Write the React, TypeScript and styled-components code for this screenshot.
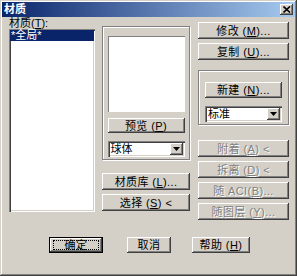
import React from 'react'
import styled, { createGlobalStyle, css } from 'styled-components'

const GlobalStyle = createGlobalStyle`
  html, body {
    margin: 0;
    padding: 0;
    background: #d4d0c8;
  }
  body {
    font-family: "Liberation Sans", "Noto Sans CJK SC", sans-serif;
    font-size: 11px;
    color: #000;
  }
`

const raised = css`
  background: #d4d0c8;
  box-shadow:
    inset -1px -1px 0 #404040,
    inset 1px 1px 0 #ffffff,
    inset -2px -2px 0 #808080,
    inset 2px 2px 0 #d4d0c8;
`

const sunken = css`
  box-shadow:
    inset 1px 1px 0 #808080,
    inset 2px 2px 0 #404040,
    inset -1px -1px 0 #ffffff,
    inset -2px -2px 0 #d4d0c8;
`

const Window = styled.div`
  width: 297px;
  height: 276px;
  box-sizing: border-box;
  padding: 2px;
  background: #d4d0c8;
  box-shadow:
    inset -1px -1px 0 #404040,
    inset 1px 1px 0 #d4d0c8,
    inset -2px -2px 0 #808080,
    inset 2px 2px 0 #ffffff;
  display: flex;
  flex-direction: column;
`

const TitleBar = styled.div`
  height: 15px;
  display: flex;
  align-items: center;
  justify-content: space-between;
  background: linear-gradient(to right, #0a246a, #a6caf0);
  padding: 0 2px;
`

const Title = styled.span`
  color: #fff;
  font-weight: bold;
  font-size: 11px;
  line-height: 13px;
`

const CloseButton = styled.div`
  ${raised}
  width: 13px;
  height: 11px;
  display: flex;
  align-items: center;
  justify-content: center;
`

const MainRow = styled.div`
  display: flex;
  align-items: flex-start;
  padding-left: 7px;
`

const Column = styled.div<{ $width: number; $left: number }>`
  width: ${p => p.$width}px;
  margin-left: ${p => p.$left}px;
  display: flex;
  flex-direction: column;
`

const Label = styled.div`
  height: 12px;
  line-height: 12px;
  white-space: nowrap;
`

const U = styled.span`
  text-decoration: underline;
`

const ListBox = styled.div`
  ${sunken}
  background: #fff;
  height: 183px;
  padding: 1px 1px;
  box-sizing: border-box;
`

const ListItem = styled.div<{ $selected?: boolean }>`
  height: 11px;
  line-height: 11px;
  padding-left: 1px;
  font-size: 11px;
  color: ${p => (p.$selected ? '#fff' : '#000')};
  background: ${p => (p.$selected ? '#0a246a' : 'transparent')};
`

const GroupBox = styled.div<{ $top: number; $height: number }>`
  margin-top: ${p => p.$top}px;
  height: ${p => p.$height}px;
  box-sizing: border-box;
  border: 1px solid #808080;
  box-shadow: inset 1px 1px 0 #fff, 1px 1px 0 #fff;
  display: flex;
  flex-direction: column;
  align-items: center;
`

const Preview = styled.div`
  margin-top: 9px;
  width: 77px;
  height: 76px;
  background: #fff;
  box-sizing: border-box;
  border-top: 1px solid #808080;
  border-left: 1px solid #808080;
`

const Button = styled.div<{ $top?: number; $width?: number; $height?: number; $disabled?: boolean }>`
  ${raised}
  margin-top: ${p => p.$top ?? 0}px;
  width: ${p => (p.$width ? `${p.$width}px` : '100%')};
  height: ${p => p.$height ?? 17}px;
  flex-shrink: 0;
  box-sizing: border-box;
  display: flex;
  align-items: center;
  justify-content: center;
  white-space: nowrap;
  font-size: 11px;
  line-height: 12px;
  letter-spacing: 0.4px;
  color: ${p => (p.$disabled ? '#808080' : '#000')};
  text-shadow: ${p => (p.$disabled ? '1px 1px 0 #fff' : 'none')};
`

const DefaultButton = styled(Button)`
  box-shadow:
    inset 0 0 0 1px #000,
    inset -2px -2px 0 #404040,
    inset 2px 2px 0 #ffffff,
    inset -3px -3px 0 #808080;
  position: relative;
`

const FocusRing = styled.span`
  position: absolute;
  inset: 3px 4px;
  border: 1px dotted #000;
`

const Combo = styled.div<{ $top: number; $width: number }>`
  ${sunken}
  margin-top: ${p => p.$top}px;
  width: ${p => p.$width}px;
  height: 16px;
  box-sizing: border-box;
  background: #fff;
  padding: 2px;
  display: flex;
  align-items: stretch;
`

const ComboText = styled.div`
  flex: 1;
  line-height: 12px;
  padding-left: 1px;
`

const ComboArrow = styled.div`
  ${raised}
  width: 13px;
  display: flex;
  align-items: center;
  justify-content: center;
`

const BottomRow = styled.div`
  display: flex;
  margin-top: 17px;
  padding-left: 47px;
`

const Gap = styled.div<{ $w: number }>`
  width: ${p => p.$w}px;
`

const Arrow = () => (
  <svg width="7" height="4" viewBox="0 0 7 4">
    <path d="M0 0h7L3.5 4z" fill="#000" />
  </svg>
)

export default function App() {
  return (
    <>
      <GlobalStyle />
      <Window>
        <TitleBar>
          <Title>材质</Title>
          <CloseButton>
            <svg width="8" height="7" viewBox="0 0 8 7">
              <path d="M0.5 0.5L7 6.5M7 0.5L0.5 6.5" stroke="#000" strokeWidth="1.6" />
            </svg>
          </CloseButton>
        </TitleBar>
        <MainRow>
          <Column $width={86} $left={0}>
            <Label>
              材质(<U>T</U>):
            </Label>
            <ListBox>
              <ListItem $selected>*全局*</ListItem>
            </ListBox>
          </Column>
          <Column $width={88} $left={7}>
            <GroupBox $top={9} $height={134}>
              <Preview />
              <Button $top={6} $width={77} $height={15}>
                预览 (<U>P</U>)
              </Button>
              <Combo $top={8} $width={77}>
                <ComboText>球体</ComboText>
                <ComboArrow>
                  <Arrow />
                </ComboArrow>
              </Combo>
            </GroupBox>
            <Button $top={13}>
              材质库 (<U>L</U>)...
            </Button>
            <Button $top={4}>
              选择 (<U>S</U>) &lt;
            </Button>
          </Column>
          <Column $width={91} $left={8}>
            <Button $top={5}>
              修改 (<U>M</U>)...
            </Button>
            <Button $top={4}>
              复制 (<U>U</U>)...
            </Button>
            <GroupBox $top={10} $height={55}>
              <Button $top={11} $width={77} $height={16}>
                新建 (<U>N</U>)...
              </Button>
              <Combo $top={8} $width={77}>
                <ComboText>标准</ComboText>
                <ComboArrow>
                  <Arrow />
                </ComboArrow>
              </Combo>
            </GroupBox>
            <Button $top={15} $disabled>
              附着 (<U>A</U>) &lt;
            </Button>
            <Button $top={4} $disabled>
              拆离 (<U>D</U>) &lt;
            </Button>
            <Button $top={4} $disabled>
              随 ACI(<U>B</U>)...
            </Button>
            <Button $top={4} $disabled>
              随图层 (<U>Y</U>)...
            </Button>
          </Column>
        </MainRow>
        <BottomRow>
          <DefaultButton $width={54} $height={16}>
            <FocusRing />
            确定
          </DefaultButton>
          <Gap $w={24} />
          <Button $width={44} $height={16}>取消</Button>
          <Gap $w={21} />
          <Button $width={58} $height={16}>
            帮助 (<U>H</U>)
          </Button>
        </BottomRow>
      </Window>
    </>
  )
}
